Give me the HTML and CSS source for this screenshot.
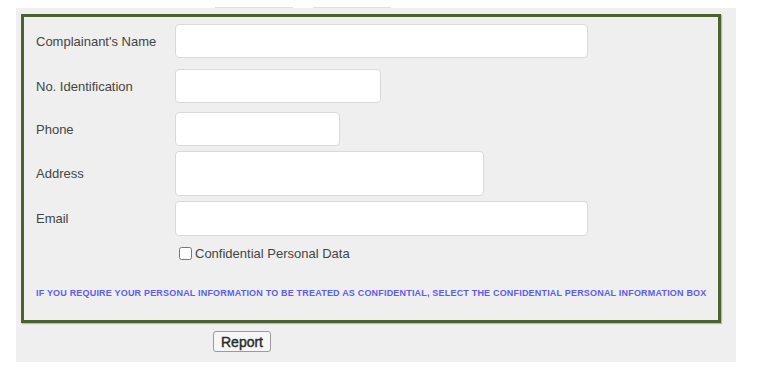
FILE: index.html
```html
<!DOCTYPE html>
<html lang="en">
<head>
<meta charset="utf-8">
<title>Complaint form</title>
<link rel="stylesheet" href="styles.css">
</head>
<body>
<div class="tabs">
  <span class="tab"></span>
  <span class="tab"></span>
</div>
<div class="panel">
  <div class="box">
    <div class="row">
      <label class="lbl">Complainant's Name</label>
      <input class="field w-name" type="text">
    </div>
    <div class="row r-id">
      <label class="lbl">No. Identification</label>
      <input class="field w-id" type="text">
    </div>
    <div class="row r-phone">
      <label class="lbl">Phone</label>
      <input class="field w-phone" type="text">
    </div>
    <div class="row r-addr">
      <label class="lbl">Address</label>
      <textarea class="field w-addr"></textarea>
    </div>
    <div class="row r-email">
      <label class="lbl">Email</label>
      <input class="field w-email" type="text">
    </div>
    <div class="row r-check">
      <span class="lbl"></span>
      <label class="check"><input type="checkbox">Confidential Personal Data</label>
    </div>
    <p class="notice">IF YOU REQUIRE YOUR PERSONAL INFORMATION TO BE TREATED AS CONFIDENTIAL, SELECT THE CONFIDENTIAL PERSONAL INFORMATION BOX</p>
  </div>
  <button class="report" type="button">Report</button>
</div>
</body>
</html>
```
FILE: styles.css
```css
html, body {
  margin: 0;
  padding: 0;
  background: #ffffff;
  font-family: "Liberation Sans", Arial, sans-serif;
}

.tabs {
  display: flex;
  gap: 20px;
  padding-left: 215px;
  height: 8px;
}

.tab {
  width: 78px;
  height: 7px;
  border-bottom: 1px solid #e2e2e2;
}

.panel {
  margin-left: 16px;
  width: 720px;
  height: 354px;
  background: #efefef;
  padding-top: 6px;
  box-sizing: border-box;
  overflow: hidden;
}

.box {
  margin-left: 5px;
  width: 700px;
  height: 309px;
  box-sizing: border-box;
  border: 3px solid #4d6230;
  box-shadow: 1px 1px 1px #b8b8b8;
  padding: 7px 0 0 12px;
}

.row {
  display: flex;
  align-items: center;
}

.r-id { margin-top: 11px; }
.r-phone { margin-top: 9px; }
.r-addr { margin-top: 5px; }
.r-email { margin-top: 5px; }
.r-check { margin-top: 8px; }

.lbl {
  width: 139px;
  flex: none;
  font-size: 13px;
  color: #444444;
}

.field {
  display: block;
  box-sizing: border-box;
  height: 34px;
  margin: 0;
  padding: 0 6px;
  background: #ffffff;
  border: 1px solid #d9d9d9;
  border-radius: 4px;
  font-family: inherit;
  font-size: 13px;
  resize: none;
  outline: none;
}

.w-name { width: 413px; }
.w-id { width: 206px; }
.w-phone { width: 165px; }
.w-addr { width: 309px; height: 45px; }
.w-email { width: 413px; height: 35px; }

.check {
  display: flex;
  align-items: center;
  font-size: 13px;
  color: #444444;
}

.check input {
  width: 13px;
  height: 13px;
  margin: 3px 3px 3px 4px;
}

.notice {
  margin: 25px 0 0 0;
  font-size: 9px;
  line-height: 11px;
  font-weight: bold;
  letter-spacing: 0.19px;
  color: #5c5cf2;
}

.report {
  display: block;
  margin: 8px 0 0 197px;
  width: 58px;
  height: 21px;
  padding: 0;
  background: #f6f6f6;
  border: 1px solid #9a9a9a;
  border-radius: 3px;
  font-family: inherit;
  font-size: 14px;
  color: #2a2a2a;
  -webkit-text-stroke: 0.4px #2a2a2a;
}
```
